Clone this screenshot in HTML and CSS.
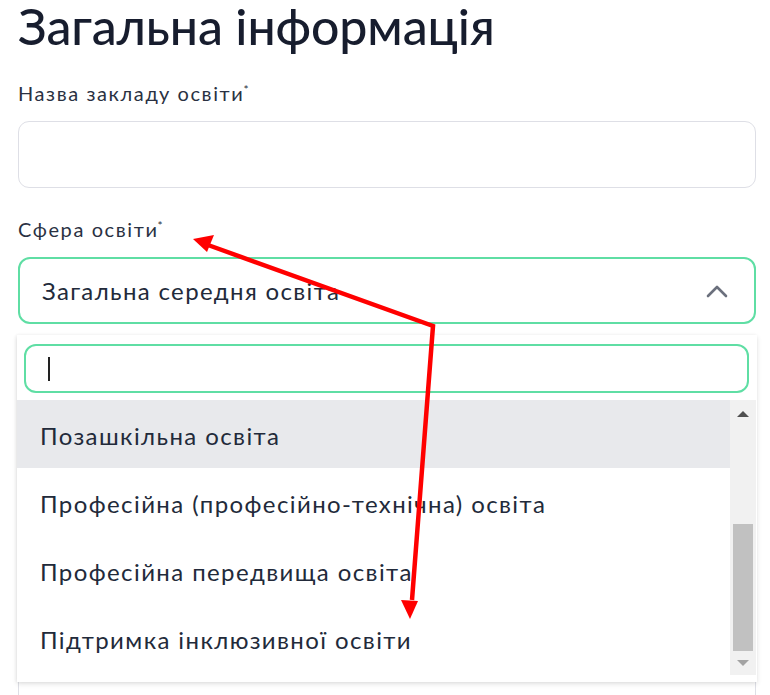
FILE: index.html
```html
<!DOCTYPE html>
<html lang="uk">
<head>
<meta charset="utf-8">
<title>Загальна інформація</title>
<link rel="stylesheet" href="styles.css">
</head>
<body>
<main class="form">
  <h1 class="title">Загальна інформація</h1>

  <div class="field">
    <label class="label">Назва закладу освіти<sup>*</sup></label>
    <div class="input"></div>
  </div>

  <div class="field field-select">
    <label class="label">Сфера освіти<sup>*</sup></label>
    <div class="select">
      <span class="select-value">Загальна середня освіта</span>
      <svg class="chevron" width="22" height="14" viewBox="0 0 22 14"><path d="M2 12 L11 3 L20 12" fill="none" stroke="#6b707d" stroke-width="2.6" stroke-linecap="round" stroke-linejoin="round"/></svg>
    </div>

    <div class="dropdown">
      <div class="search"><span class="caret"></span></div>
      <div class="list-wrap">
        <ul class="list">
          <li class="item active">Позашкільна освіта</li>
          <li class="item">Професійна (професійно-технічна) освіта</li>
          <li class="item">Професійна передвища освіта</li>
          <li class="item">Підтримка інклюзивної освіти</li>
        </ul>
        <div class="scrollbar">
          <span class="sb-up"></span>
          <div class="sb-track"><div class="sb-thumb"></div></div>
          <span class="sb-down"></span>
        </div>
      </div>
    </div>
  </div>

  <div class="field">
    <label class="label">Тип закладу освіти<sup>*</sup></label>
    <div class="input"></div>
  </div>
  <div class="field">
    <label class="label">Форма власності<sup>*</sup></label>
    <div class="input"></div>
  </div>
  <div class="field">
    <label class="label">Код ЄДРПОУ<sup>*</sup></label>
    <div class="input tall"></div>
  </div>
</main>

<svg class="annot" width="770" height="695" viewBox="0 0 770 695">
  <polyline points="208,245 433,326 412,600" fill="none" stroke="#ff0000" stroke-width="4.5" stroke-linejoin="miter" />
  <path d="M193 239 L214 235 L207 252 Z" fill="#ff0000"/>
  <path d="M410 619 L401 600 L418 601 Z" fill="#ff0000"/>
</svg>
</body>
</html>
```

FILE: styles.css
```css
html, body {
  margin: 0;
  padding: 0;
  background: #ffffff;
}

body {
  font-family: "Lato", "Open Sans", sans-serif;
  color: #1f2535;
  width: 770px;
  height: 695px;
  overflow: hidden;
  position: relative;
}

.form {
  padding: 0 14px 0 18px;
  width: 738px;
  display: flex;
  flex-direction: column;
}

.title {
  margin: -2px 0 0 0;
  font-size: 50px;
  line-height: 56px;
  font-weight: 500;
  color: #171d2e;
  letter-spacing: -0.1px;
}

.field {
  display: flex;
  flex-direction: column;
}

.label {
  font-size: 20px;
  line-height: 24px;
  height: 24px;
  color: #2a3142;
  margin-top: 27px;
  margin-bottom: 16px;
  letter-spacing: 1.6px;
}

.label sup {
  font-size: 12px;
  line-height: 0;
  vertical-align: 0;
  position: relative;
  top: -7px;
  margin-left: -1px;
}

.input {
  height: 67px;
  border: 1.5px solid #dedfe6;
  border-radius: 11px;
  box-sizing: border-box;
}

.input.tall {
  height: 80px;
}

.field-select {
  position: relative;
}

.field-select .label {
  margin-top: 29px;
}

.select {
  height: 67px;
  box-sizing: border-box;
  border: 2px solid #5fdea4;
  border-radius: 12px;
  display: flex;
  align-items: center;
  justify-content: space-between;
  padding: 0 26px 0 22px;
}

.select-value {
  font-size: 24px;
  letter-spacing: 1.35px;
  color: #222a3a;
}

.chevron {
  display: block;
}

.dropdown {
  position: absolute;
  left: -1px;
  top: 100%;
  width: 740px;
  background: #ffffff;
  box-shadow: 0 2px 5px rgba(0, 0, 0, 0.12), -1px 0 3px rgba(0, 0, 0, 0.05);
  padding: 9px 0 7px 0;
  box-sizing: border-box;
  display: flex;
  flex-direction: column;
  gap: 7px;
  z-index: 2;
  transform: translateY(11px);
}

.search {
  margin: 0 8px 0 7px;
  height: 49px;
  box-sizing: border-box;
  border: 2px solid #5fdea4;
  border-radius: 12px;
  display: flex;
  align-items: center;
  padding-left: 22px;
}

.caret {
  display: block;
  width: 2px;
  height: 24px;
  background: #222;
}

.list-wrap {
  display: flex;
  height: 275px;
}

.list {
  list-style: none;
  margin: 0;
  padding: 0;
  flex: 1;
}

.item {
  height: 68px;
  display: flex;
  align-items: center;
  padding-left: 23px;
  padding-top: 2px;
  box-sizing: border-box;
  font-size: 24px;
  letter-spacing: 1.4px;
  color: #222a3a;
}

.item.active {
  background: #e8e9ec;
}

.scrollbar {
  width: 26px;
  margin-right: 1px;
  background: #f1f1f1;
  display: flex;
  flex-direction: column;
  align-items: center;
}

.sb-up, .sb-down {
  display: block;
  width: 0;
  height: 0;
  border-left: 6px solid transparent;
  border-right: 6px solid transparent;
}

.sb-up {
  border-bottom: 6px solid #505050;
  margin-top: 11px;
  margin-bottom: 11px;
}

.sb-down {
  border-top: 6px solid #a3a3a3;
  margin-top: 9px;
  margin-bottom: 9px;
}

.sb-track {
  flex: 1;
  width: 100%;
  display: flex;
  flex-direction: column;
  justify-content: flex-end;
  align-items: center;
}

.sb-thumb {
  width: 20px;
  height: 127px;
  background: #c1c1c1;
}

.annot {
  position: absolute;
  left: 0;
  top: 0;
  pointer-events: none;
  z-index: 5;
}
```
